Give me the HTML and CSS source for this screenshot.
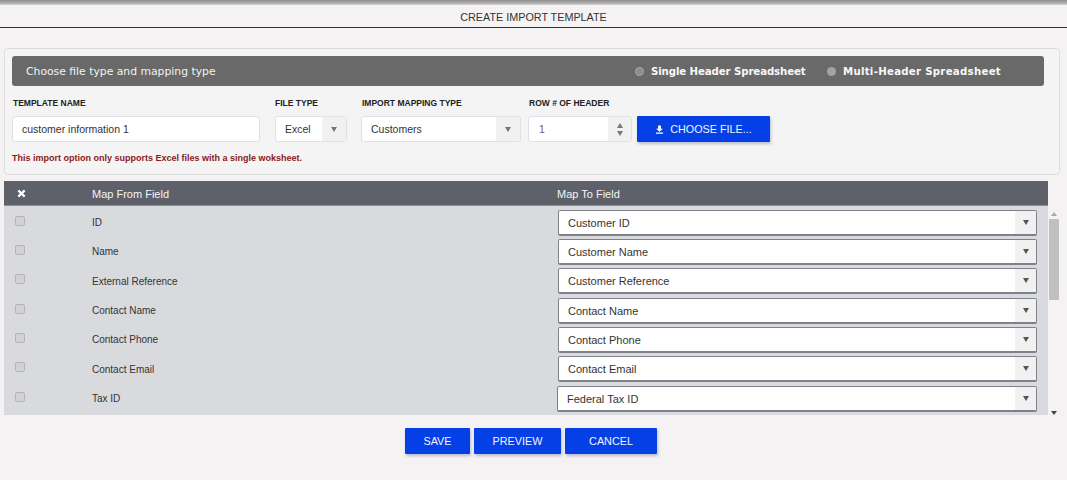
FILE: index.html
```html
<!DOCTYPE html>
<html lang="en">
<head>
<meta charset="utf-8">
<title>Create Import Template</title>
<link rel="stylesheet" href="styles.css">
</head>
<body>
<div class="topline"></div>
<h1 class="title">CREATE IMPORT TEMPLATE</h1>
<section class="panel">
  <div class="panel-head">
    <span class="panel-title">Choose file type and mapping type</span>
    <span class="radios">
      <span class="radio radio-single"><i class="dot dot-on"></i>Single Header Spreadsheet</span>
      <span class="radio radio-multi"><i class="dot"></i>Multi-Header Spreadsheet</span>
    </span>
  </div>
  <div class="fields">
    <div class="field f-name"><label class="lbl">TEMPLATE NAME</label><div class="ctl"><span class="val">customer information 1</span></div></div>
    <div class="field f-type"><label class="lbl">FILE TYPE</label><div class="ctl"><span class="val">Excel</span><span class="arrow"><i class="tri-down"></i></span></div></div>
    <div class="field f-map"><label class="lbl">IMPORT MAPPING TYPE</label><div class="ctl"><span class="val">Customers</span><span class="arrow"><i class="tri-down"></i></span></div></div>
    <div class="field f-row"><label class="lbl">ROW # OF HEADER</label><div class="ctl"><span class="val val-dim">1</span><span class="spin"><i class="tri-up"></i><i class="tri-down"></i></span></div></div>
    <button class="btn btn-file" type="button">
      <svg class="dl" viewBox="0 0 10 10" width="9" height="9"><path d="M3.4 0.5h3.2v3.6h2.2L5 7.6 1.2 4.1h2.2zM1 8.4h8v1.2H1z" fill="#fff"/></svg>CHOOSE FILE...
    </button>
  </div>
  <p class="note">This import option only supports Excel files with a single woksheet.</p>
</section>
<section class="map">
  <div class="map-head">
    <span class="c-x"><svg viewBox="0 0 10 10" width="9" height="9"><path d="M2.4 0.6 5 3.2 7.6 0.6 9.4 2.4 6.8 5 9.4 7.6 7.6 9.4 5 6.8 2.4 9.4 0.6 7.6 3.2 5 0.6 2.4z" fill="#fff"/></svg></span>
    <span class="c-from">Map From Field</span>
    <span class="c-to">Map To Field</span>
  </div>
  <div class="map-body">
    <div class="rows">
      <div class="row"><i class="chk"></i><span class="c-from">ID</span><div class="sel"><span class="val">Customer ID</span><span class="arrow"><i class="tri-down dark"></i></span></div></div>
      <div class="row"><i class="chk"></i><span class="c-from">Name</span><div class="sel"><span class="val">Customer Name</span><span class="arrow"><i class="tri-down dark"></i></span></div></div>
      <div class="row"><i class="chk"></i><span class="c-from">External Reference</span><div class="sel"><span class="val">Customer Reference</span><span class="arrow"><i class="tri-down dark"></i></span></div></div>
      <div class="row"><i class="chk"></i><span class="c-from">Contact Name</span><div class="sel"><span class="val">Contact Name</span><span class="arrow"><i class="tri-down dark"></i></span></div></div>
      <div class="row"><i class="chk"></i><span class="c-from">Contact Phone</span><div class="sel"><span class="val">Contact Phone</span><span class="arrow"><i class="tri-down dark"></i></span></div></div>
      <div class="row"><i class="chk"></i><span class="c-from">Contact Email</span><div class="sel"><span class="val">Contact Email</span><span class="arrow"><i class="tri-down dark"></i></span></div></div>
      <div class="row"><i class="chk"></i><span class="c-from">Tax ID</span><div class="sel"><span class="val">Federal Tax ID</span><span class="arrow"><i class="tri-down dark"></i></span></div></div>
    </div>
    <div class="scroll">
      <i class="sb-up"></i>
      <div class="track"><div class="thumb"></div></div>
      <i class="sb-down"></i>
    </div>
  </div>
</section>
<div class="actions">
  <button class="btn b-save" type="button">SAVE</button>
  <button class="btn b-prev" type="button">PREVIEW</button>
  <button class="btn b-cancel" type="button">CANCEL</button>
</div>
</body>
</html>
```
FILE: styles.css
```css
* { box-sizing: border-box; }
html, body { margin: 0; height: 100%; }
body {
  width: 1067px;
  height: 480px;
  overflow: hidden;
  background: #f4f2f3;
  font-family: "Liberation Sans", Arial, sans-serif;
  font-size: 11px;
  color: #222;
}
.topline { height: 5px; background: linear-gradient(#8f8f8f, #b5b5b5 70%, #d8d8d8); }
.title {
  margin: 0;
  height: 23px;
  border-bottom: 1px solid #333;
  font-size: 10.8px;
  font-weight: 400;
  line-height: 24px;
  text-align: center;
  color: #333;
}
.panel {
  margin: 20px 7px 0 4px;
  height: 127px;
  padding: 7px 15px 0 7px;
  border: 1px solid #dcdcdc;
  border-radius: 4px;
  background: #f4f4f4;
}
.panel-head {
  height: 30px;
  display: flex;
  align-items: center;
  justify-content: space-between;
  padding: 0 43px 0 14px;
  background: #696969;
  border-radius: 3px;
  color: #f2f2f2;
  font-family: "DejaVu Sans", Verdana, sans-serif;
}
.panel-title { font-size: 10.8px; }
.radios { display: flex; }
.radio {
  display: flex;
  align-items: center;
  font-size: 10.2px;
  font-weight: 700;
  color: #f8f8f8;
}
.radio-single { width: 192px; letter-spacing: -.1px; }
.radio-multi { letter-spacing: .28px; }
.dot {
  width: 9px;
  height: 9px;
  margin-right: 7px;
  border-radius: 50%;
  background: #a3a3a3;
}
.dot-on { background: #8c8c8c; border: 1.5px solid #a9a9a9; }
.fields { display: flex; margin-top: 12px; }
.field { display: flex; flex-direction: column; }
.lbl {
  height: 18px;
  padding-left: 1px;
  font-size: 8.5px;
  font-weight: 700;
  line-height: 11px;
  color: #222;
}
.ctl {
  height: 26px;
  display: flex;
  align-items: stretch;
  background: #fff;
  border: 1px solid #dfe1e5;
  border-radius: 3px;
  font-size: 10.5px;
  color: #333;
}
.f-name { width: 263px; }
.f-name .ctl { width: 248px; }
.f-type { width: 86px; }
.f-type .lbl { padding-left: 0; }
.f-type .ctl { width: 72px; }
.f-map { width: 167px; }
.f-map .ctl { width: 160px; }
.f-row { width: 109px; }
.f-row .ctl { width: 104px; }
.val { flex: 1; padding-left: 9px; line-height: 25px; white-space: nowrap; }
.val-dim { padding-left: 10px; color: #666; }
.arrow {
  width: 24px;
  display: flex;
  align-items: center;
  justify-content: center;
  background: #f1f1f1;
}
.spin {
  width: 23px;
  display: flex;
  flex-direction: column;
  align-items: center;
  justify-content: center;
  gap: 3px;
  background: #f1f1f1;
}
.tri-down, .tri-up, .sb-up, .sb-down {
  display: block;
  width: 0;
  height: 0;
  border-left: 3.5px solid transparent;
  border-right: 3.5px solid transparent;
}
.tri-down { border-top: 5px solid #777; }
.tri-up { border-bottom: 5px solid #777; }
.tri-down.dark { border-top-color: #555; }
.btn {
  border: 0;
  border-radius: 1px;
  background: #0540e6;
  color: #f2f5ff;
  font-family: "Liberation Sans", Arial, sans-serif;
  font-size: 10.8px;
  box-shadow: 1px 2px 3px rgba(80, 90, 130, .35);
  padding: 0;
  height: 26px;
}
.btn-file {
  width: 133px;
  margin-top: 18px;
  display: flex;
  align-items: center;
  justify-content: center;
  gap: 6px;
}
.note {
  margin: 10px 0 0;
  font-size: 9px;
  font-weight: 700;
  color: #8b1a1a;
  line-height: 12px;
}
.map { margin: 6px 7px 0 4px; }
.map-head {
  width: 1044px;
  height: 25px;
  padding-top: 1px;
  display: flex;
  align-items: center;
  background: #5e6169;
  color: #f4f4f4;
  border-bottom: 1px solid #8d9096;
}
.c-x { width: 88px; padding-left: 13px; display: flex; }
.map-head .c-from { width: 465px; }
.map-body { display: flex; height: 209px; }
.rows { width: 1044px; background: #d9dade; display: flex; flex-direction: column; padding-top: 2px; }
.row {
  height: 29.33px;
  display: flex;
  align-items: center;
  color: #333;
}
.chk {
  width: 10px;
  height: 10px;
  margin: -4px 0 0 11px;
  border: 1px solid #b4b4b6;
  border-radius: 2px;
  background: #d2d2d4;
}
.row .c-from { width: 466px; margin: 0 0 0 67px; font-size: 10px; }
.row:last-child .c-from { width: 465px; }
.sel {
  width: 479px;
  height: 26px;
  display: flex;
  align-items: stretch;
  background: #fff;
  border: 1px solid #7f8288;
  border-bottom-width: 2px;
  border-radius: 2px;
  color: #333;
}
.row:last-child .sel { width: 480px; }
.sel .val { padding-left: 9px; line-height: 24px; }
.sel .arrow { width: 21px; }
.scroll {
  width: 12px;
  margin-top: 3px;
  display: flex;
  flex-direction: column;
  align-items: center;
  background: #f4f2f3;
}
.sb-up { margin-top: 3px; border-bottom: 4px solid #a8a8a8; }
.sb-down { margin-top: 5px; border-top: 4px solid #444; }
.track { flex: 1; width: 10px; margin-top: 3px; }
.thumb { height: 81px; background: #c0c0c0; }
.actions { display: flex; justify-content: center; gap: 4px; margin: 13px 0 0 -5px; }
.b-save { width: 65px; }
.b-prev { width: 87px; }
.b-cancel { width: 92px; }
```
